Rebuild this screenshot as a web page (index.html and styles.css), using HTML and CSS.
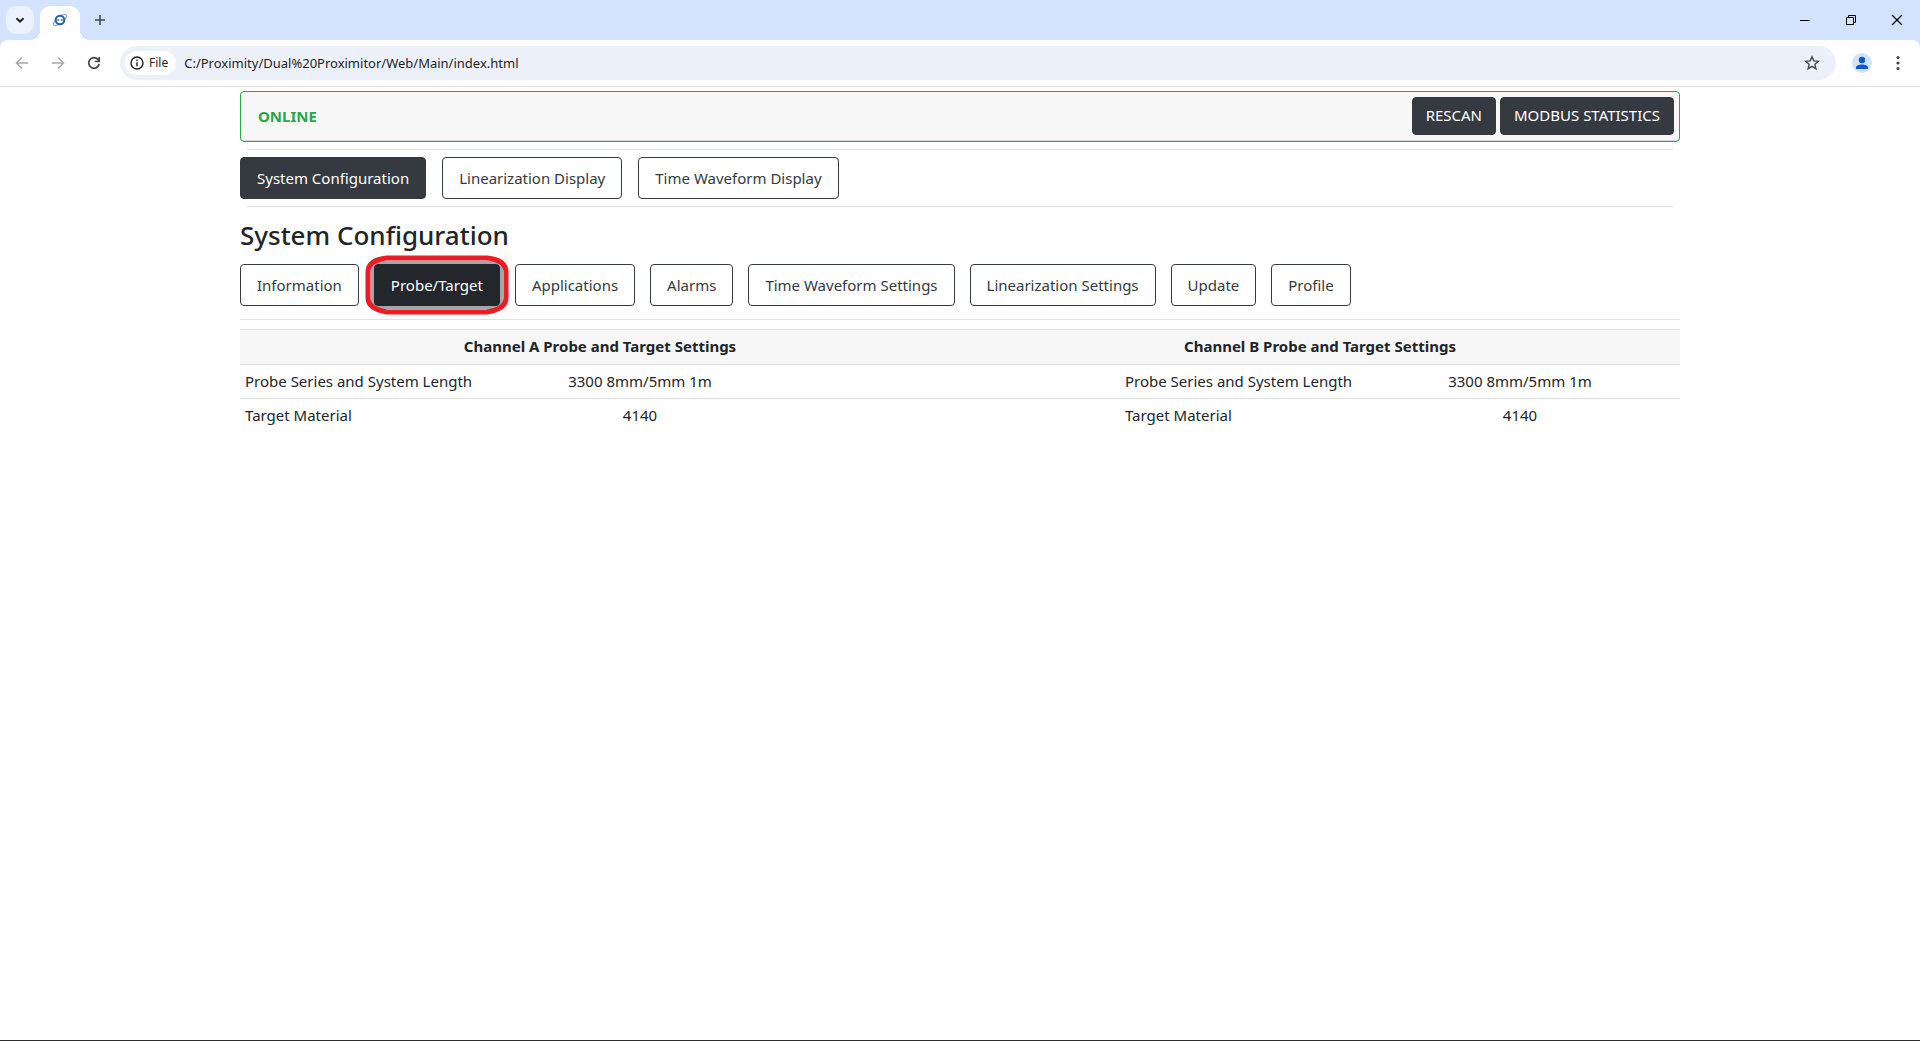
FILE: index.html
```html
<!DOCTYPE html>
<html lang="en">
<head>
<meta charset="utf-8">
<title>Dual Proximitor</title>
<link rel="stylesheet" href="styles.css">
</head>
<body>
<div class="window">
  <header class="browser">
    <div class="tabstrip">
      <button class="tab-search" aria-label="Search tabs"><svg width="10" height="10" viewBox="0 0 10 10"><path d="M1.5 3.2 5 6.7 8.500 3.200" fill="none" stroke="#1f1f1f" stroke-width="2"/></svg></button>
      <div class="tab"><svg width="16" height="16" viewBox="0 0 16 16" fill="none"><ellipse cx="8" cy="8" rx="8" ry="3" transform="rotate(-38 8 8)" stroke="#8fa9bf" stroke-width="1"/><circle cx="8" cy="8" r="4.300" fill="#fff" stroke="#1f64a0" stroke-width="2"/><path d="M5.500 6.500v3l2-1.500zM10.500 9.500v-3l-2 1.500z" fill="#1f64a0"/></svg></div>
      <button class="icon-btn new-tab" aria-label="New tab"><svg width="12" height="12" viewBox="0 0 12 12"><path d="M6 1v10M1 6h10" stroke="#474747" stroke-width="1.600"/></svg></button>
      <div class="window-controls">
        <button class="win-btn" aria-label="Minimize"><svg width="12" height="12" viewBox="0 0 12 12"><path d="M1 6.500h10" stroke="#000"/></svg></button>
        <button class="win-btn" aria-label="Restore"><svg width="12" height="12" viewBox="0 0 12 12" fill="none" stroke="#000"><path d="M1.500 3.500h7v7h-7zM3.500 3.500v-2h7v7h-2"/></svg></button>
        <button class="win-btn" aria-label="Close"><svg width="12" height="12" viewBox="0 0 12 12"><path d="M1 1l10 10M11 1 1 11" stroke="#000" stroke-width="1.200"/></svg></button>
      </div>
    </div>
    <div class="toolbar">
      <button class="icon-btn" aria-label="Back"><svg width="16" height="16" viewBox="0 0 16 16" fill="none" stroke="#a9a9a9" stroke-width="1.600"><path d="M14 8H3M8 2.500 2.500 8 8 13.500"/></svg></button>
      <button class="icon-btn" aria-label="Forward"><svg width="16" height="16" viewBox="0 0 16 16" fill="none" stroke="#a9a9a9" stroke-width="1.600"><path d="M2 8h11M8 2.500 13.500 8 8 13.500"/></svg></button>
      <button class="icon-btn" aria-label="Reload"><svg width="16" height="16" viewBox="0 0 16 16" fill="none" stroke="#474747" stroke-width="1.700"><path d="M13.200 9A5.300 5.300 0 1 1 12 4.400L13 5.800M13.200 2v4.500H8.700"/></svg></button>
      <div class="omnibox">
        <button class="site-chip"><svg width="14" height="14" viewBox="0 0 14 14" fill="none" stroke="#1f1f1f" stroke-width="1.400"><circle cx="7" cy="7" r="6"/><path d="M7 6.200v4M7 3.600v1.400"/></svg>File</button>
        <input class="url" type="text" aria-label="Address" value="C:/Proximity/Dual%20Proximitor/Web/Main/index.html">
        <button class="icon-btn" aria-label="Bookmark"><svg width="16" height="16" viewBox="0 0 16 16" fill="none" stroke="#474747" stroke-width="1.400"><path d="m8 1.800 1.800 4.100 4.500.4-3.400 3 1 4.400L8 11.400l-3.900 2.300 1-4.400-3.400-3 4.500-.4z"/></svg></button>
      </div>
      <button class="icon-btn profile" aria-label="Profile"><svg width="20" height="20" viewBox="0 0 20 20"><circle cx="10" cy="10" r="10" fill="#d3e3fd"/><circle cx="10" cy="7" r="3.200" fill="#0b57d0"/><path d="M4 16v-1.500C4 12.500 7 11.500 10 11.500s6 1 6 3V16z" fill="#0b57d0"/></svg></button>
      <button class="icon-btn" aria-label="Menu"><svg width="16" height="16" viewBox="0 0 16 16" fill="#474747"><circle cx="8" cy="2.500" r="1.600"/><circle cx="8" cy="8" r="1.600"/><circle cx="8" cy="13.500" r="1.600"/></svg></button>
    </div>
  </header>

  <main class="page">
    <section class="status">
      <strong class="status-text">ONLINE</strong>
      <button class="btn btn-dark btn-short">RESCAN</button>
      <button class="btn btn-dark btn-short">MODBUS STATISTICS</button>
    </section>
    <hr class="rule inset">
    <nav class="buttons">
      <button class="btn btn-dark">System Configuration</button>
      <button class="btn">Linearization Display</button>
      <button class="btn">Time Waveform Display</button>
    </nav>
    <hr class="rule inset">
    <h1 class="title">System Configuration</h1>
    <nav class="buttons sections">
      <button class="btn">Information</button>
      <button class="btn btn-active">Probe/Target<svg class="marker" viewBox="0 0 143 60" preserveAspectRatio="none" fill="none"><path d="M22 3H121Q140 5 140 17V43Q140 54 121 57H22Q3 54 3 43V17Q3 5 22 3Z" stroke="#ed1c24" stroke-width="5"/></svg></button>
      <button class="btn">Applications</button>
      <button class="btn">Alarms</button>
      <button class="btn">Time Waveform Settings</button>
      <button class="btn">Linearization Settings</button>
      <button class="btn">Update</button>
      <button class="btn">Profile</button>
    </nav>
    <hr class="rule spaced">
    <table class="settings">
      <colgroup><col class="c-label"><col class="c-value"><col class="c-gap"><col class="c-gap"><col class="c-label"><col class="c-value"></colgroup>
      <thead>
        <tr><th colspan="3">Channel A Probe and Target Settings</th><th colspan="3">Channel B Probe and Target Settings</th></tr>
      </thead>
      <tbody>
        <tr><td>Probe Series and System Length</td><td class="value">3300 8mm/5mm 1m</td><td></td><td></td><td>Probe Series and System Length</td><td class="value">3300 8mm/5mm 1m</td></tr>
        <tr><td>Target Material</td><td class="value">4140</td><td></td><td></td><td>Target Material</td><td class="value">4140</td></tr>
      </tbody>
    </table>
  </main>
  <footer class="taskbar"></footer>
</div>
</body>
</html>
```
FILE: styles.css
```css
* { box-sizing: border-box; }
body {
  margin: 0;
  background: #fff;
  color: #212529;
  font: 15px/24px "Noto Sans", "Open Sans", sans-serif;
}
button { font: inherit; cursor: pointer; }
.window { display: flex; flex-direction: column; min-height: 100vh; }

/* Browser chrome */
.browser { background: #d3e3fd; }
.tabstrip { display: flex; height: 40px; padding: 6px 0 0 6px; }
.tab-search {
  display: grid; place-items: center;
  width: 28px; height: 28px; margin-right: 6px; padding: 0;
  border: 0; border-radius: 10px; background: #ebf1fd;
}
.tab {
  position: relative;
  display: grid; place-items: center;
  width: 40px; height: 34px; padding-bottom: 6px;
  background: #fff; border-radius: 10px 10px 0 0;
}
.tab::before, .tab::after {
  content: ""; position: absolute; bottom: 0; width: 10px; height: 10px;
}
.tab::before { right: 100%; background: radial-gradient(circle at 0 0, transparent 10px, #fff 10px); }
.tab::after { left: 100%; background: radial-gradient(circle at 100% 0, transparent 10px, #fff 10px); }
.icon-btn {
  display: grid; place-items: center;
  width: 36px; height: 28px; padding: 0; border: 0; background: none;
}
.new-tab { margin-left: 2px; }
.window-controls { display: flex; margin-left: auto; }
.win-btn {
  display: grid; place-items: center;
  width: 46px; height: 28px; padding: 0; border: 0; background: none;
}
.toolbar {
  display: flex; align-items: center;
  height: 47px; padding: 0 4px;
  background: #fff; border-bottom: 1px solid #e1e3e1; border-radius: 8px 8px 0 0;
}
.omnibox {
  display: flex; align-items: center; flex: 1;
  height: 34px; margin: 0 8px; padding: 0 6px 0 5px;
  background: #ecf0f9; border-radius: 17px;
}
.site-chip {
  display: flex; align-items: center; gap: 5px;
  height: 24px; padding: 0 8px 0 5px;
  border: 0; border-radius: 12px; background: #fff; color: #1f1f1f; font-size: 12px;
}
.url {
  flex: 1; height: 28px; padding: 0 8px;
  border: 0; outline: 0; background: none; color: #1f1f1f;
  font: 13px "Noto Sans", "Open Sans", sans-serif;
}

/* Page */
.page { width: 75%; margin: 0 auto; padding-top: 4px; flex: 1; }
.status {
  display: flex; align-items: center; gap: 4px;
  height: 51px; padding: 0 5px 2px 17px;
  background: #f7f7f7; border: 1px solid #28a745; border-radius: 4px;
  box-shadow: inset 0 -1px #dadadb;
}
.status-text { margin-right: auto; color: #28a745; }
.rule { margin: 7px 0; border: 0; border-top: 1px solid #e0e0e0; }
.inset { margin-left: 7px; margin-right: 7px; }
.spaced { margin: 13px 0 9px; border-color: #dee2e6; }
.buttons { display: flex; flex-wrap: wrap; gap: 16px; }
.sections { column-gap: 15px; }
.btn {
  height: 42px; padding: 0 16px 1px;
  background: #fff; border: 1px solid #343a40; border-radius: 4px; color: #343a40;
}
.btn-short { height: 38px; padding: 0 13px 1px; }
.btn-dark { background: #343a40; color: #fff; }
.btn-active {
  position: relative;
  background: #23272b; color: #fff; border-color: #23272b;
  box-shadow: 0 0 0 3px #a4a7aa;
}
.marker {
  position: absolute; left: -10px; top: -10px;
  width: calc(100% + 20px); height: 60px;
}
.title { margin: 10px 0; font-size: 26px; line-height: 37px; font-weight: 500; }

.settings { width: 100%; table-layout: fixed; border-collapse: collapse; }
.c-label { width: 16.6667%; }
.c-value { width: 22.2222%; }
.c-gap { width: 11.1111%; }
.settings th { height: 35px; padding: 0 5px 2px; background: #f7f7f7; border-top: 1px solid #dee2e6; }
.settings td { height: 34px; padding: 0 5px 2px; border-top: 1px solid #dee2e6; white-space: nowrap; }
.settings .value { text-align: center; }
.taskbar { height: 1px; background: #26303a; }
```
